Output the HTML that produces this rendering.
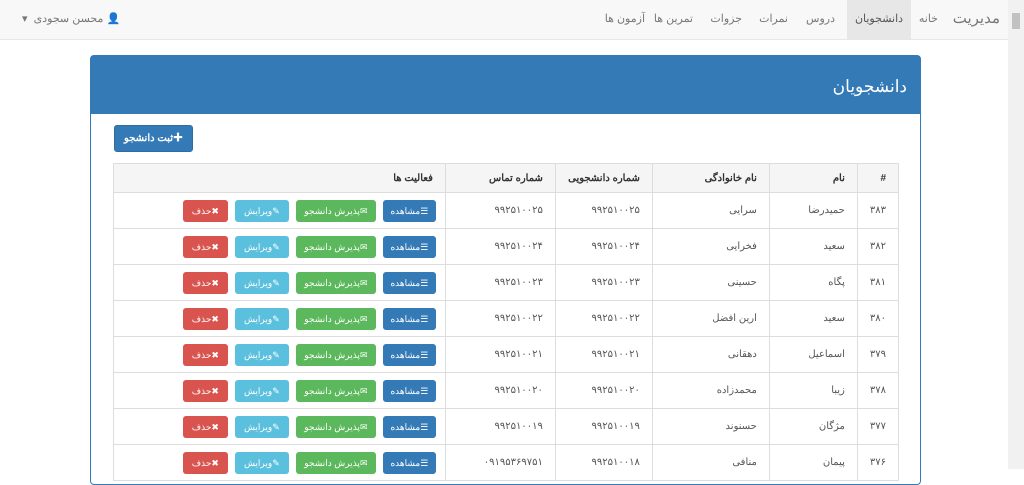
<!DOCTYPE html>
<html><head><meta charset="utf-8">
<style>
*{box-sizing:border-box;margin:0;padding:0}
body{width:1024px;height:469px;overflow:hidden;background:#fff;font-family:"Liberation Sans","Noto Sans CJK SC",sans-serif;position:relative;color:#333}
.nav{position:absolute;left:0;top:0;width:1008px;height:40px;background:#f8f8f8;border-bottom:1px solid #e7e7e7}
.nav span{position:absolute;top:0;height:39px;line-height:38px;font-size:11px;color:#777;white-space:nowrap}
.sb{position:absolute;left:1008px;top:0;width:16px;height:469px;background:#f1f1f1}
.sb .th{position:absolute;left:4px;top:13px;width:8px;height:16px;background:#c1c1c1}
.panel{position:absolute;left:90px;top:55px;width:831px;height:430px;border:1px solid #337ab7;border-radius:4px}
.ph{height:58px;background:#337ab7;color:#fff;font-size:17px;text-align:right;padding:21px 13px 0 0;direction:rtl}
.add{position:absolute;left:23px;top:69px;width:79px;height:27px;background:#337ab7;border:1px solid #2e6da4;border-radius:3px;color:#fff;font-size:10px;font-weight:bold;text-align:center;line-height:25px;direction:rtl}
table{position:absolute;left:22px;top:107px;width:786px;border-collapse:collapse;direction:rtl;font-size:10px}
td,th{border:1px solid #ddd;text-align:right;padding:0 12px;color:#555;font-weight:normal}
th{height:29px;background:#f5f5f5;font-weight:bold;color:#333}
td{height:36px}
td.a{padding-right:9px}
.b{display:inline-block;height:22px;line-height:22px;border-radius:3px;color:#fff;font-size:9px;text-align:center;vertical-align:middle;margin-left:7px}
.b1{background:#337ab7;width:53px}.b2{background:#5cb85c;width:80px}.b3{background:#5bc0de;width:54px}.b4{background:#d9534f;width:45px}
</style></head><body>
<div class="nav">
<span style="right:8px;font-size:15px;color:#777">مدیریت</span>
<span style="right:70px">خانه</span>
<span style="right:97px;width:64px;background:#e7e7e7;text-align:center;color:#555">دانشجویان</span>
<span style="right:173px">دروس</span>
<span style="right:220px">نمرات</span>
<span style="right:266px">جزوات</span>
<span style="right:315px">تمرین ها</span>
<span style="right:363px">آزمون ها</span>
<span style="left:22px">▾ &nbsp;محسن سجودی <b style="color:#666">&#x1F464;</b></span>
</div>
<div class="sb"><div class="th"></div></div>
<div class="panel">
<div class="ph">دانشجویان</div>
<div class="add">✚ثبت دانشجو</div>
<table>
<tr><th style="width:40px">#</th><th style="width:88px">نام</th><th style="width:117px">نام خانوادگی</th><th style="width:97px">شماره دانشجویی</th><th style="width:110px">شماره تماس</th><th>فعالیت ها</th></tr>
<tr><td>۳۸۳</td><td>حمیدرضا</td><td>سرایی</td><td>۹۹۲۵۱۰۰۲۵</td><td>۹۹۲۵۱۰۰۲۵</td><td class="a"><span class="b b1">☰مشاهده</span><span class="b b2">✉پذیرش دانشجو</span><span class="b b3">✎ویرایش</span><span class="b b4">✖حذف</span></td></tr>
<tr><td>۳۸۲</td><td>سعید</td><td>فخرایی</td><td>۹۹۲۵۱۰۰۲۴</td><td>۹۹۲۵۱۰۰۲۴</td><td class="a"><span class="b b1">☰مشاهده</span><span class="b b2">✉پذیرش دانشجو</span><span class="b b3">✎ویرایش</span><span class="b b4">✖حذف</span></td></tr>
<tr><td>۳۸۱</td><td>پگاه</td><td>حسینی</td><td>۹۹۲۵۱۰۰۲۳</td><td>۹۹۲۵۱۰۰۲۳</td><td class="a"><span class="b b1">☰مشاهده</span><span class="b b2">✉پذیرش دانشجو</span><span class="b b3">✎ویرایش</span><span class="b b4">✖حذف</span></td></tr>
<tr><td>۳۸۰</td><td>سعید</td><td>ارین افضل</td><td>۹۹۲۵۱۰۰۲۲</td><td>۹۹۲۵۱۰۰۲۲</td><td class="a"><span class="b b1">☰مشاهده</span><span class="b b2">✉پذیرش دانشجو</span><span class="b b3">✎ویرایش</span><span class="b b4">✖حذف</span></td></tr>
<tr><td>۳۷۹</td><td>اسماعیل</td><td>دهقانی</td><td>۹۹۲۵۱۰۰۲۱</td><td>۹۹۲۵۱۰۰۲۱</td><td class="a"><span class="b b1">☰مشاهده</span><span class="b b2">✉پذیرش دانشجو</span><span class="b b3">✎ویرایش</span><span class="b b4">✖حذف</span></td></tr>
<tr><td>۳۷۸</td><td>زیبا</td><td>محمدزاده</td><td>۹۹۲۵۱۰۰۲۰</td><td>۹۹۲۵۱۰۰۲۰</td><td class="a"><span class="b b1">☰مشاهده</span><span class="b b2">✉پذیرش دانشجو</span><span class="b b3">✎ویرایش</span><span class="b b4">✖حذف</span></td></tr>
<tr><td>۳۷۷</td><td>مژگان</td><td>حسنوند</td><td>۹۹۲۵۱۰۰۱۹</td><td>۹۹۲۵۱۰۰۱۹</td><td class="a"><span class="b b1">☰مشاهده</span><span class="b b2">✉پذیرش دانشجو</span><span class="b b3">✎ویرایش</span><span class="b b4">✖حذف</span></td></tr>
<tr><td>۳۷۶</td><td>پیمان</td><td>منافی</td><td>۹۹۲۵۱۰۰۱۸</td><td>۰۹۱۹۵۳۶۹۷۵۱</td><td class="a"><span class="b b1">☰مشاهده</span><span class="b b2">✉پذیرش دانشجو</span><span class="b b3">✎ویرایش</span><span class="b b4">✖حذف</span></td></tr>
</table>
</div>
</body></html>
